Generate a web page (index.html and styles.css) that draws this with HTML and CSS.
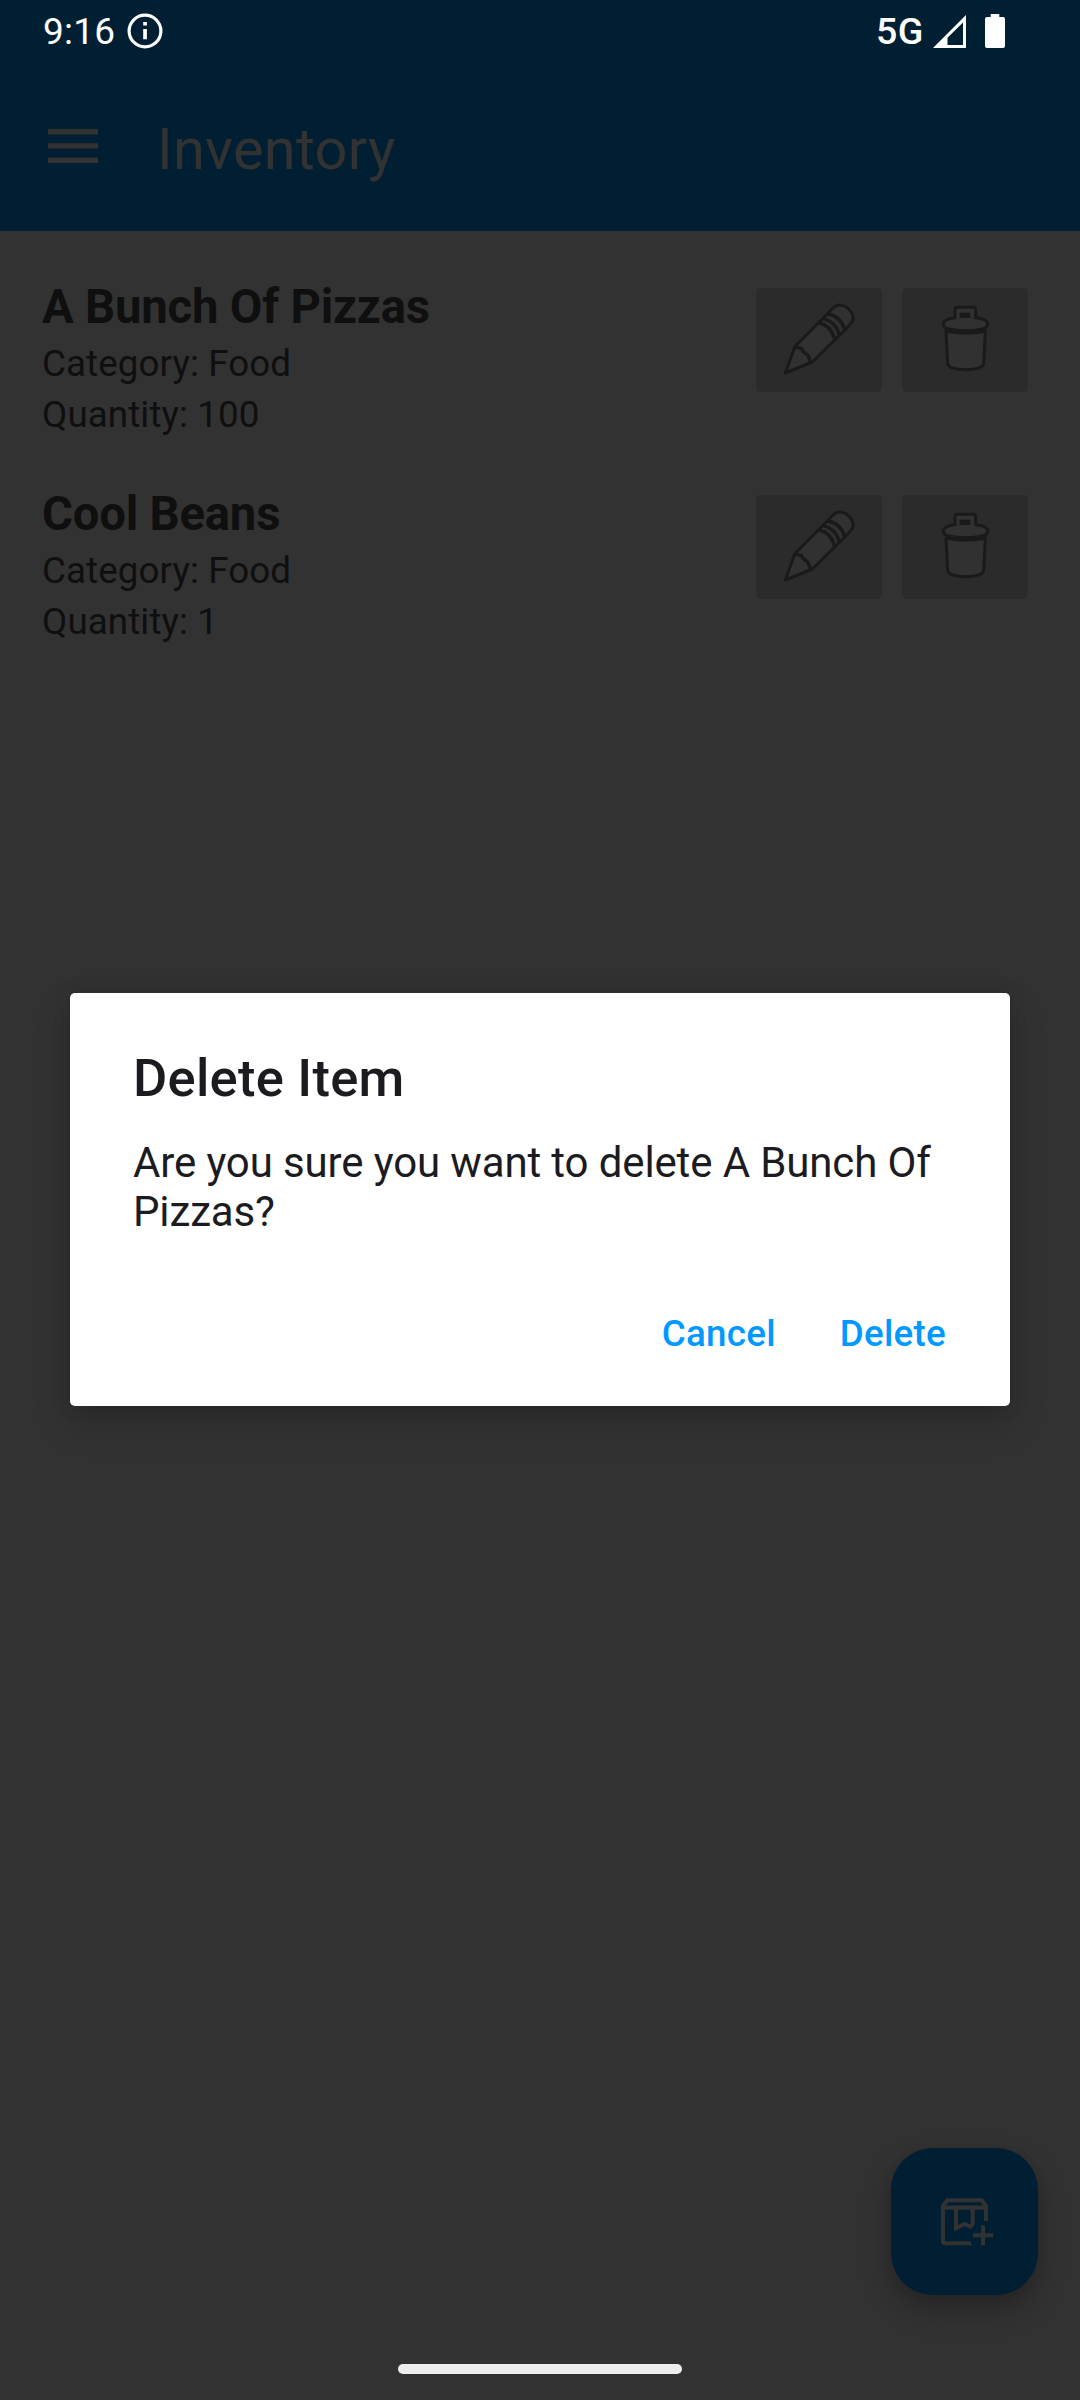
FILE: index.html
```html
<!DOCTYPE html>
<html lang="en">
<head>
<meta charset="utf-8">
<title>Inventory</title>
<link rel="stylesheet" href="styles.css">
</head>
<body>
<div class="screen">
  <header class="top">
    <div class="status">
      <span class="clock">9:16</span>
      <svg class="info" viewBox="0 0 36 36"><circle cx="18" cy="18" r="15.9" fill="none" stroke="#fff" stroke-width="3.2"/><path d="M16.2 9h3.7v3.6h-3.7zM16.2 16h3.7v10.3h-3.7z" fill="#fff"/></svg>
      <span class="network">5G</span>
      <svg class="signal" viewBox="0 0 33 33"><path fill="#fff" fill-rule="evenodd" d="M33 0V33H0ZM30 7.5 14.5 22.8V30H30Z"/></svg>
      <svg class="battery" viewBox="0 0 20 34"><path fill="#fff" d="M5.7 0h8.6v3H18a2 2 0 0 1 2 2v27a2 2 0 0 1-2 2H2a2 2 0 0 1-2-2V5a2 2 0 0 1 2-2h3.700z"/></svg>
    </div>
    <div class="appbar">
      <svg class="menu" viewBox="0 0 50 34"><path fill="#323232" d="M0 0h50v5.400H0zM0 14.200h50v5.400H0zM0 28.500h50v5.400H0z"/></svg>
      <h1 class="page-title">Inventory</h1>
    </div>
  </header>

  <svg class="defs" width="0" height="0">
    <symbol id="pencil" viewBox="48 54 378 312">
      <g fill="#313131" stroke="#1a1a1a" stroke-width="9" stroke-linejoin="round" stroke-linecap="round">
        <path d="M136 309 165 229 262 132 278 115Q297 97 320 112 348 134 336 156L318 177 284 210 217 276Z"/>
        <path fill="none" stroke-width="10" d="M166 232 184 235 189 244 204 256 211 275"/>
        <path fill="none" stroke-width="10.500" d="M238 159Q272 166 283 205M251 146Q287 155 298 194M264 132Q302 139 314 179"/>
      </g>
    </symbol>
    <symbol id="trash" viewBox="486 54 378 312">
      <g fill="#313131" stroke="#1a1a1a" stroke-width="9" stroke-linejoin="round">
        <path d="M618 184 623 281Q627 298 677 299 727 298 731 281L736 184Z"/>
        <path fill="none" stroke-width="11" d="M618 183Q677 195 736 183"/>
        <path d="M610 162Q610 147 645 143V120Q645 112 653 112H699Q707 112 707 120V143Q743 147 743 162 743 172 732 175 677 190 620 175 610 172 610 162Z"/>
        <path fill="#1a1a1a" stroke="none" d="M659 128H691V144H659Z"/>
      </g>
    </symbol>
  </svg>

  <main class="list">
    <section class="item">
      <div class="details">
        <h2 class="name">A Bunch Of Pizzas</h2>
        <p class="meta">Category: Food</p>
        <p class="meta">Quantity: 100</p>
      </div>
      <button class="action" aria-label="Edit"><svg class="glyph"><use href="#pencil"/></svg></button>
      <button class="action" aria-label="Delete"><svg class="glyph"><use href="#trash"/></svg></button>
    </section>
    <section class="item">
      <div class="details">
        <h2 class="name">Cool Beans</h2>
        <p class="meta">Category: Food</p>
        <p class="meta">Quantity: 1</p>
      </div>
      <button class="action" aria-label="Edit"><svg class="glyph"><use href="#pencil"/></svg></button>
      <button class="action" aria-label="Delete"><svg class="glyph"><use href="#trash"/></svg></button>
    </section>
  </main>

  <button class="fab" aria-label="Add item">
    <svg class="fab-icon" viewBox="240 230 162 150">
      <g fill="none" stroke="#323232" stroke-width="12">
        <path d="M378 302V257L365 240H262L249 257V363Q249 369 255 369H333"/>
        <path d="M249 262H378" stroke-width="13"/>
        <path d="M288 266V324L314 311 331 319 338 311V266"/>
        <path d="M339 345H399M369 315V375"/>
      </g>
      <path fill="#323232" d="M328 363 337 375H324ZM372 290H384V303L372 300Z"/>
    </svg>
  </button>

  <div class="dialog" role="dialog">
    <h2 class="dialog-title">Delete Item</h2>
    <p class="message">Are you sure you want to delete A Bunch Of Pizzas?</p>
    <div class="dialog-actions">
      <button class="text-button">Cancel</button>
      <button class="text-button">Delete</button>
    </div>
  </div>
  <div class="home-bar"></div>
</div>
</body>
</html>
```
FILE: styles.css
```css
* { box-sizing: border-box; }
body { margin: 0; font-family: Roboto, sans-serif; background: #323232; }
h1, h2, p { margin: 0; }
button { border: 0; padding: 0; margin: 0; font-family: inherit; }
svg { display: block; flex: none; }
.screen { position: relative; width: 1080px; height: 2400px; overflow: hidden; background: #323232; }
.defs { position: absolute; }

.top { height: 231px; background: #001f33; }
.status { display: flex; align-items: center; height: 62px; padding: 0 75px 0 43px; color: #fff; font-size: 37px; line-height: 43px; }
.clock { width: 84px; letter-spacing: .2px; }
.info { width: 36px; height: 36px; }
.network { margin-left: auto; font-size: 37.5px; font-weight: 500; letter-spacing: .6px; }
.signal { width: 33px; height: 33px; margin-left: 9px; }
.battery { width: 20px; height: 34px; margin-left: 19px; }
.appbar { display: flex; align-items: flex-start; padding: 54px 48px 0; }
.menu { width: 50px; height: 34px; margin-top: 13px; }
.page-title { margin-left: 59px; color: #323232; font-size: 57.75px; line-height: 66px; font-weight: 400; letter-spacing: .25px; }

.list { padding: 48px 52px 0 42px; }
.item { display: flex; align-items: flex-start; height: 207px; }
.details { flex: 1; color: #0f0f10; padding-top: 1px; }
.name { font-size: 47.25px; line-height: 55px; font-weight: 700; letter-spacing: -.2px; margin-bottom: 3px; }
.meta { font-size: 36.75px; line-height: 51px; letter-spacing: .1px; }
.action { width: 126px; height: 104px; margin: 9px 0 0 20px; border-radius: 5px; background: #2b2b2b; }
.glyph { width: 126px; height: 104px; }

.fab { position: absolute; left: 891px; top: 2148px; width: 147px; height: 147px; display: flex; border-radius: 42px; background: #001f33; box-shadow: 0 14px 28px rgba(0, 0, 0, .25), 0 2px 10px rgba(0, 0, 0, .08); }
.fab-icon { width: 54px; height: 50px; margin: 48.700px 0 0 49px; }

.dialog { position: absolute; left: 70px; top: 993px; width: 940px; height: 413px; padding: 54px 64px 0 63px; border-radius: 5px; background: #fff; color: #1c1b1f; box-shadow: 0 16px 36px rgba(0, 0, 0, .18), 0 0 18px rgba(0, 0, 0, .12); }
.dialog-title { font-size: 52.5px; line-height: 62px; font-weight: 500; letter-spacing: .25px; }
.message { margin-top: 29px; font-size: 42px; line-height: 49px; letter-spacing: -.13px; }
.dialog-actions { display: flex; justify-content: flex-end; gap: 64px; margin-top: 76px; }
.text-button { background: none; color: #0099ff; font-size: 36.75px; line-height: 43px; font-weight: 500; letter-spacing: .26px; }

.home-bar { position: absolute; left: 398px; top: 2364px; width: 284px; height: 10px; border-radius: 5px; background: #eee; }
```
